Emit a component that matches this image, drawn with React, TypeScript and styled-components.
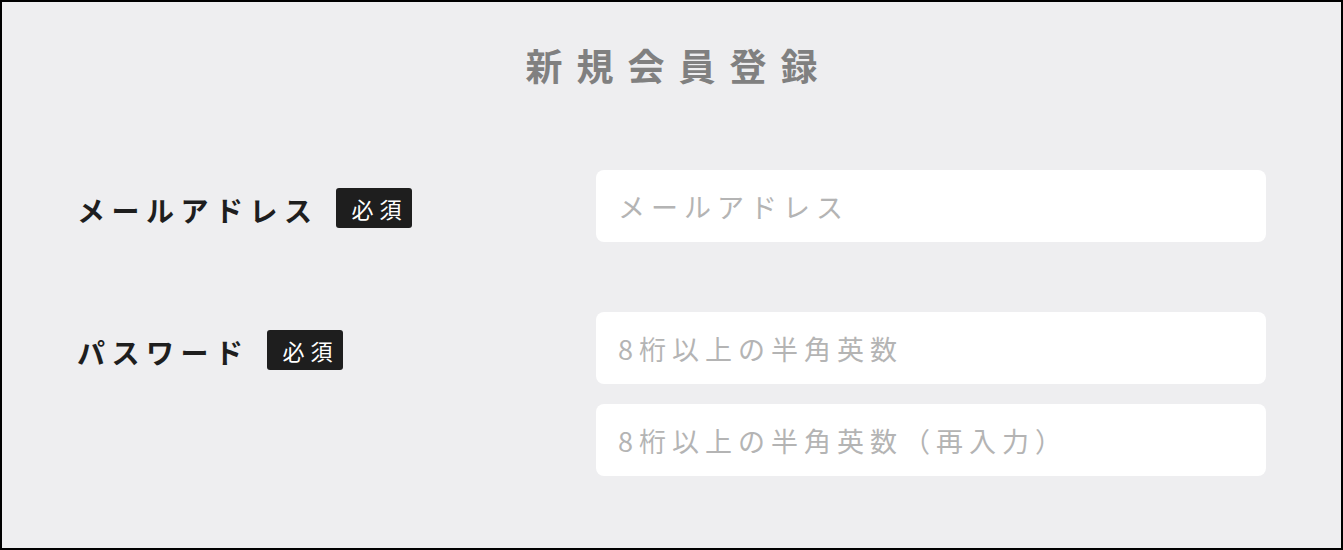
import styled, { createGlobalStyle } from "styled-components";

const GlobalStyle = createGlobalStyle`
  * {
    box-sizing: border-box;
  }

  body {
    margin: 0;
    font-family: "Noto Sans CJK JP", "Noto Sans", sans-serif;
  }
`;

type TField = {
  label: string;
  placeholders: string[];
};

const FIELDS: TField[] = [
  { label: "メールアドレス", placeholders: ["メールアドレス"] },
  {
    label: "パスワード",
    placeholders: ["8桁以上の半角英数", "8桁以上の半角英数（再入力）"],
  },
];

const App = () => {
  return (
    <>
      <GlobalStyle />
      <StyledFrame>
        <Title>新規会員登録</Title>
        <Form>
          {FIELDS.map((field) => (
            <FieldRow key={field.label}>
              <LabelCell>
                <Label>{field.label}</Label>
                <Required>必須</Required>
              </LabelCell>
              <InputStack>
                {field.placeholders.map((placeholder) => (
                  <TextInput
                    key={placeholder}
                    type={field.label === "パスワード" ? "password" : "email"}
                    placeholder={placeholder}
                  />
                ))}
              </InputStack>
            </FieldRow>
          ))}
        </Form>
      </StyledFrame>
    </>
  );
};

export default App;

const StyledFrame = styled.div`
  width: 1343px;
  height: 550px;
  border: 2px solid #000;
  background: #eeeef0;
  padding: 45px 75px 0 75px;
`;

const Title = styled.h1`
  margin: 0;
  padding-left: 14px;
  text-align: center;
  font-size: 37px;
  line-height: 1;
  font-weight: 700;
  letter-spacing: 14px;
  color: #808080;
`;

const Form = styled.div`
  margin-top: 86px;
  display: flex;
  flex-direction: column;
  gap: 70px;
`;

const FieldRow = styled.div`
  display: flex;
  align-items: flex-start;
`;

const LabelCell = styled.div`
  width: 519px;
  height: 72px;
  display: flex;
  align-items: center;
  gap: 17px;
`;

const Label = styled.span`
  font-size: 28px;
  font-weight: 700;
  letter-spacing: 6.5px;
  color: #1e1e1e;
  margin-top: 8px;
`;

const Required = styled.span`
  height: 40px;
  display: flex;
  align-items: center;
  padding: 0 4px 0 16px;
  border-radius: 3px;
  background: #1e1e1e;
  color: #fff;
  font-size: 22px;
  letter-spacing: 6px;
  margin-top: 4px;
`;

const InputStack = styled.div`
  flex: 1;
  display: flex;
  flex-direction: column;
  gap: 20px;
`;

const TextInput = styled.input`
  height: 72px;
  width: 100%;
  border: none;
  border-radius: 8px;
  background: #fff;
  padding: 0 22px;
  font-family: inherit;
  font-size: 27px;
  letter-spacing: 6px;
  color: #333;
  outline: none;

  &::placeholder {
    color: #b4b4b4;
  }
`;
